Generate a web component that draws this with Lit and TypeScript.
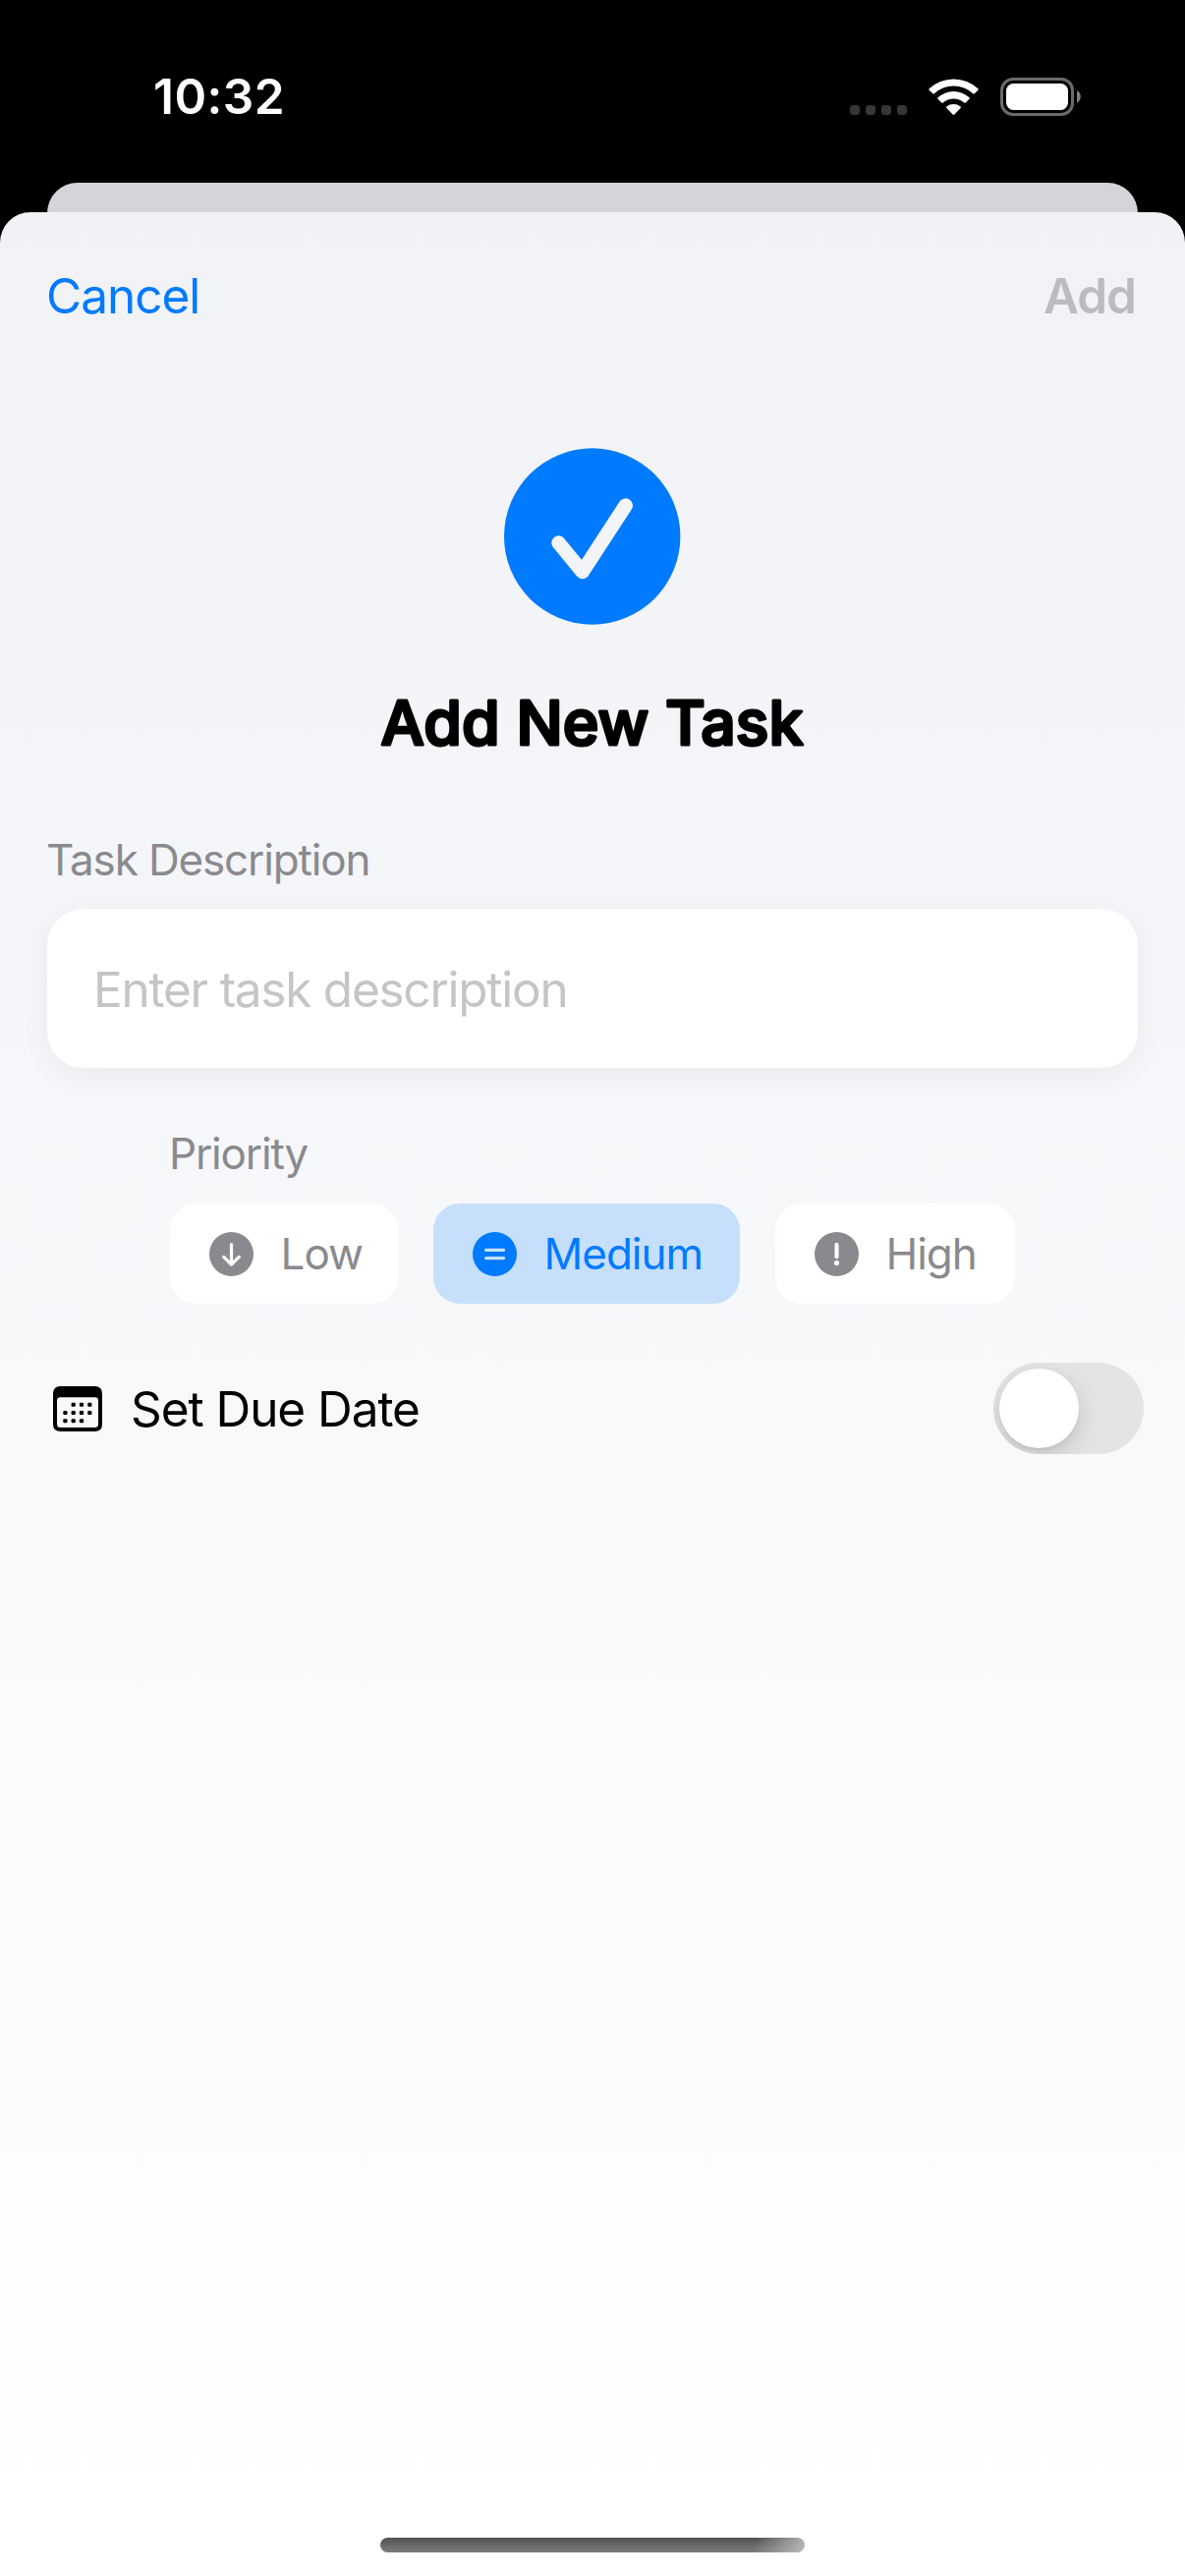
import { LitElement, html, css, svg } from "lit";
import { customElement, property, state } from "lit/decorators.js";

type Priority = "low" | "medium" | "high";

const GLYPHS = {
  low: svg`<path d="M22.5 12.5V32.5M14.7 25.4L22.5 33L30.3 25.4" />`,
  medium: svg`<path d="M13.6 18.4H31.6M13.6 26.6H31.6" />`,
  high: svg`<path d="M22.5 12.8V25.2" stroke-width="4" /><circle class="dot" cx="22.5" cy="31.6" r="2.6" />`,
};

@customElement("priority-chip")
class PriorityChip extends LitElement {
  @property() kind: Priority = "low";
  @property() label = "";
  @property({ type: Boolean, reflect: true }) selected = false;

  static styles = css`
    :host { display: block; }
    .chip {
      display: flex;
      align-items: center;
      gap: 27.5px;
      width: 100%;
      height: 102px;
      box-sizing: border-box;
      padding: 0 0 0 40px;
      border: 0;
      border-radius: 27px;
      background: #fff;
      color: #8a8a8e;
      font: 400 44px/102px Inter, "Liberation Sans", sans-serif;
      letter-spacing: -1px;
      white-space: nowrap;
    }
    :host([selected]) .chip { background: #c6dffb; color: #007aff; }
    .icon { flex: none; width: 45px; height: 45px; display: block; }
    .disc { fill: currentColor; }
    .mark { fill: none; stroke: #fff; stroke-width: 3.2; stroke-linecap: round; stroke-linejoin: round; }
    .dot { fill: #fff; stroke: none; }
    :host([selected]) .mark { stroke: #c6dffb; }
  `;

  render() {
    return html`<button class="chip">
      <svg class="icon" viewBox="0 0 45 45">
        <circle class="disc" cx="22.5" cy="22.5" r="22.5" />
        <g class="mark">${GLYPHS[this.kind]}</g>
      </svg>
      <span>${this.label}</span>
    </button>`;
  }
}

@customElement("app-root")
class AppRoot extends LitElement {
  @state() private priority: Priority = "medium";

  static styles = css`
    :host {
      display: block;
      width: 1206px;
      height: 2622px;
      overflow: hidden;
      background: #000;
      font-family: Inter, "Liberation Sans", sans-serif;
    }
    .screen { display: flex; flex-direction: column; height: 2622px; }
    .status {
      display: flex;
      align-items: center;
      height: 186px;
      box-sizing: border-box;
      padding: 10px 106px 0 156px;
      color: #fff;
    }
    .time { flex: 1; font-size: 49.5px; font-weight: 600; line-height: 60px; letter-spacing: 0.5px; }
    .status-icons { display: block; width: 236px; height: 40px; }
    .behind {
      flex: none;
      height: 66px;
      margin: 0 48px -36px;
      border-radius: 31px 31px 0 0;
      background: #d4d5d9;
    }
    .sheet {
      flex: 1;
      display: flex;
      flex-direction: column;
      border-radius: 31px 31px 0 0;
      background: linear-gradient(#f0f2f6, #fff);
    }
    .nav {
      display: flex;
      justify-content: space-between;
      padding: 55px 50px 0 47px;
      font-size: 49.5px;
      line-height: 60px;
    }
    .nav button, .nav .add { border: 0; padding: 0; background: none; font: inherit; }
    .nav .cancel { color: #007aff; letter-spacing: -1px; }
    .nav .add { color: #bbbcc0; font-weight: 600; letter-spacing: -1px; }
    .hero { display: flex; flex-direction: column; align-items: center; padding-top: 125px; }
    .badge { width: 180px; height: 180px; display: block; }
    .title { display: block; margin-top: 60px; width: 520px; height: 80px; }
    .title text {
      font: 500 62.5px Inter, "Liberation Sans", sans-serif;
      fill: #000;
      stroke: #000;
      stroke-width: 3;
      stroke-linejoin: round;
    }
    .form { display: flex; flex-direction: column; padding: 69px 48px 0; }
    .label { color: #8a8a8e; font-size: 44px; line-height: 60px; letter-spacing: -1.15px; margin-left: -1px; }
    .field {
      display: flex;
      align-items: center;
      height: 160px;
      margin-top: 20px;
      padding: 2px 48px 0 47px;
      border-radius: 37px;
      background: #fff;
      box-shadow: 0 6px 30px rgba(0, 0, 0, 0.055);
      color: #c5c5c7;
      font-size: 49.5px;
      letter-spacing: -1.25px;
    }
    .priority { display: flex; flex-direction: column; margin: 57px 125px 0; }
    .chips { display: grid; grid-template-columns: 232px 312px 244px; gap: 36px; margin-top: 21px; }
    .due { display: flex; align-items: center; margin: 60px -6px 0 6px; height: 93px; }
    .calendar { display: block; width: 50px; height: 46px; }
    .due-text { flex: 1; margin-left: 29px; font-size: 49.5px; line-height: 60px; letter-spacing: -1.06px; color: #000; }
    .toggle {
      width: 153px;
      height: 93px;
      box-sizing: border-box;
      padding: 6px;
      border-radius: 47px;
      background: #e3e4e6;
      overflow: hidden;
    }
    .knob {
      width: 81px;
      height: 81px;
      border-radius: 50%;
      background: #fff;
      box-shadow: 0 9px 24px rgba(0, 0, 0, 0.15), 0 3px 3px rgba(0, 0, 0, 0.04);
    }
    .home {
      width: 432px;
      height: 15px;
      margin: auto auto 24px 387px;
      border-radius: 8px;
      background:
        linear-gradient(100deg, rgba(190, 190, 190, 0) 88%, rgba(190, 190, 190, 0.9) 100%),
        linear-gradient(#505251, #7c7c7c);
    }
  `;

  private choose(p: Priority) {
    this.priority = p;
  }

  render() {
    const options: [Priority, string][] = [["low", "Low"], ["medium", "Medium"], ["high", "High"]];
    return html`<div class="screen">
      <div class="status">
        <span class="time">10:32</span>
        <svg class="status-icons" viewBox="864 77 236 40">
          <g fill="#363636">
            <rect x="865" y="106" width="10" height="10" rx="3.4" />
            <rect x="881" y="106" width="10" height="10" rx="3.4" />
            <rect x="897" y="106" width="10" height="10" rx="3.4" />
            <rect x="913" y="106" width="10" height="10" rx="3.4" />
          </g>
          <g fill="#fff">
            <path d="M945.6 89.3Q945 90 945.7 90.7L949.3 94.3Q950 95 950.8 94.3A29 29 0 0 1 990.2 94.3Q991 95 991.7 94.3L995.4 90.7Q996 90 995.4 89.3A36.500 36.500 0 0 0 945.6 89.3Z" />
            <path d="M954.5 98.3Q953.8 99 954.5 99.7L958.3 103.4Q959 104 959.8 103.4A16.500 16.500 0 0 1 981.2 103.4Q982 104 982.7 103.4L986.5 99.7Q987.2 99 986.5 98.3A23.500 23.500 0 0 0 954.5 98.3Z" />
            <path d="M963.4 107.4Q962.6 108.2 963.4 109L969.6 115.4Q970.5 116.3 971.4 115.4L977.6 109Q978.4 108.2 977.6 107.4A11.5 11.5 0 0 0 963.4 107.4Z" />
          </g>
          <rect x="1019.5" y="79.5" width="72" height="36" rx="11.5" fill="none" stroke="#6b6b6b" stroke-width="3" />
          <rect x="1024" y="84" width="63" height="27" rx="7.5" fill="#fff" />
          <path d="M1096 91.2C1101 93 1101 101.600 1096 103.400Z" fill="#808080" />
        </svg>
      </div>
      <div class="behind"></div>
      <div class="sheet">
        <div class="nav">
          <button class="cancel">Cancel</button>
          <span class="add">Add</span>
        </div>
        <div class="hero">
          <svg class="badge" viewBox="0 0 180 180">
            <circle cx="89.700" cy="90" r="89.700" fill="#007aff" />
            <path d="M55.500 96.500L79.700 126L123.700 58.500" fill="none" stroke="#f2f4f7" stroke-width="14.500" stroke-linecap="round" stroke-linejoin="round" />
          </svg>
          <svg class="title" viewBox="0 0 520 80">
            <text x="259.500" y="61.700" text-anchor="middle" textLength="430">Add New Task</text>
          </svg>
        </div>
        <div class="form">
          <span class="label">Task Description</span>
          <div class="field">Enter task description</div>
          <div class="priority">
            <span class="label">Priority</span>
            <div class="chips">
              ${options.map(([kind, label]) => html`<priority-chip
                .kind=${kind}
                .label=${label}
                ?selected=${this.priority === kind}
                @click=${() => this.choose(kind)}
              ></priority-chip>`)}
            </div>
          </div>
          <div class="due">
            <svg class="calendar" viewBox="0 0 50 46">
              <path fill-rule="evenodd" d="M7.500 0H42.500Q50 0 50 7.500V38.500Q50 46 42.500 46H7.500Q0 46 0 38.500V7.500Q0 0 7.500 0ZM7.200 11.300Q4 11.300 4 14.500V38.500Q4 42 7.500 42H42.500Q46 42 46 38.500V14.500Q46 11.300 42.800 11.300Z" />
              ${[[1, 0], [2, 0], [3, 0], [0, 1], [1, 1], [2, 1], [3, 1], [0, 2], [1, 2], [2, 2]].map(
                ([c, r]) => svg`<rect x=${10.3 + c * 8.3} y=${16.8 + r * 8.2} width="4.200" height="4" rx="1" />`
              )}
            </svg>
            <span class="due-text">Set Due Date</span>
            <div class="toggle"><div class="knob"></div></div>
          </div>
        </div>
        <div class="home"></div>
      </div>
    </div>`;
  }
}
